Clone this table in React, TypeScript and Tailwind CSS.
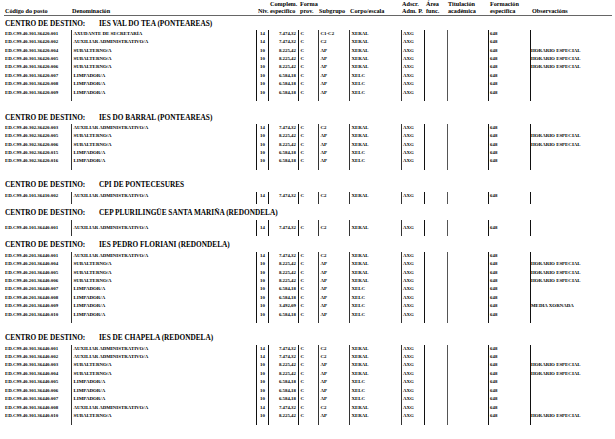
import React from "react";

type Row = [string, string, string, string, string, string, string];

const C = [
  "w-[67px] pl-[1px]",
  "w-[185px] border-solid border-l-[1px] border-l-[#333] pl-[1.5px]",
  "w-[12px] border-solid border-l-[1.5px] border-l-[#111] justify-center",
  "w-[30px] border-solid border-l-[1.5px] border-l-[#111] justify-end pr-[2px]",
  "w-[20px] border-solid border-l-[1.5px] border-l-[#111] pl-[1.5px]",
  "w-[31px] border-solid border-l-[1px] border-l-[#333] pl-[1.5px]",
  "w-[52px] border-solid border-l-[1px] border-l-[#333] pl-[1.5px]",
  "w-[23px] border-solid border-l-[1px] border-l-[#333] pl-[1px]",
  "w-[23px] border-solid border-l-[1.5px] border-l-[#111]",
  "w-[41px] border-solid border-l-[1px] border-l-[#555]",
  "w-[42px] border-solid border-l-[1.5px] border-l-[#111] pl-[1px]",
  "w-[82px] border-solid border-l-[1.5px] border-l-[#111]",
];

type Section = { name: string; mt: string; pre?: boolean; rows: Row[] };

const AUX = "AUXILIAR ADMINISTRATIVO/A";
const SUB = "SUBALTERNO/A";
const LIM = "LIMPADOR/A";
const HE = "HORARIO ESPECIAL";

const sections: Section[] = [
  {
    name: "IES VAL DO TEA (PONTEAREAS)",
    mt: "mt-0",
    rows: [
      ["ED.C99.40.301.36420.001", "AXUDANTE DE SECRETARÍA", "14", "7.474,32", "C1-C2", "XERAL", ""],
      ["ED.C99.40.301.36420.002", AUX, "14", "7.474,32", "C2", "XERAL", ""],
      ["ED.C99.40.301.36420.004", SUB, "10", "8.225,42", "AP", "XERAL", HE],
      ["ED.C99.40.301.36420.005", SUB, "10", "8.225,42", "AP", "XERAL", HE],
      ["ED.C99.40.301.36420.006", SUB, "10", "8.225,42", "AP", "XERAL", HE],
      ["ED.C99.40.301.36420.007", LIM, "10", "6.584,18", "AP", "XELC", ""],
      ["ED.C99.40.301.36420.008", LIM, "10", "6.584,18", "AP", "XELC", ""],
      ["ED.C99.40.301.36420.009", LIM, "10", "6.584,18", "AP", "XELC", ""],
    ],
  },
  {
    name: "IES DO BARRAL (PONTEAREAS)",
    mt: "mt-[8.6px]",
    rows: [
      ["ED.C99.40.302.36420.003", AUX, "14", "7.474,32", "C2", "XERAL", ""],
      ["ED.C99.40.302.36420.005", SUB, "10", "8.225,42", "AP", "XERAL", HE],
      ["ED.C99.40.302.36420.006", SUB, "10", "8.225,42", "AP", "XERAL", HE],
      ["ED.C99.40.302.36420.015", LIM, "10", "6.584,18", "AP", "XELC", ""],
      ["ED.C99.40.302.36420.016", LIM, "10", "6.584,18", "AP", "XELC", ""],
    ],
  },
  {
    name: "CPI DE PONTECESURES",
    mt: "mt-[7.8px]",
    rows: [["ED.C99.40.101.36410.002", AUX, "14", "7.474,32", "C2", "XERAL", ""]],
  },
  {
    name: "CEP PLURILINGÜE SANTA MARIÑA (REDONDELA)",
    mt: "mt-[1.6px]",
    pre: true,
    rows: [["ED.C99.40.101.36440.001", AUX, "14", "7.474,32", "C2", "XERAL", ""]],
  },
  {
    name: "IES PEDRO FLORIANI (REDONDELA)",
    mt: "mt-[1.6px]",
    rows: [
      ["ED.C99.40.201.36440.001", AUX, "14", "7.474,32", "C2", "XERAL", ""],
      ["ED.C99.40.201.36440.004", SUB, "10", "8.225,42", "AP", "XERAL", HE],
      ["ED.C99.40.201.36440.005", SUB, "10", "8.225,42", "AP", "XERAL", HE],
      ["ED.C99.40.201.36440.006", SUB, "10", "8.225,42", "AP", "XERAL", HE],
      ["ED.C99.40.201.36440.007", LIM, "10", "6.584,18", "AP", "XELC", ""],
      ["ED.C99.40.201.36440.008", LIM, "10", "6.584,18", "AP", "XELC", ""],
      ["ED.C99.40.201.36440.009", LIM, "10", "3.492,09", "AP", "XELC", "MEDIA XORNADA"],
      ["ED.C99.40.201.36440.010", LIM, "10", "6.584,18", "AP", "XELC", ""],
    ],
  },
  {
    name: "IES DE CHAPELA (REDONDELA)",
    mt: "mt-[7.6px]",
    rows: [
      ["ED.C99.40.301.36440.001", AUX, "14", "7.474,32", "C2", "XERAL", ""],
      ["ED.C99.40.301.36440.002", AUX, "14", "7.474,32", "C2", "XERAL", ""],
      ["ED.C99.40.301.36440.003", SUB, "10", "8.225,42", "AP", "XERAL", HE],
      ["ED.C99.40.301.36440.004", SUB, "10", "8.225,42", "AP", "XERAL", HE],
      ["ED.C99.40.301.36440.005", LIM, "10", "6.584,18", "AP", "XELC", ""],
      ["ED.C99.40.301.36440.006", LIM, "10", "6.584,18", "AP", "XELC", ""],
      ["ED.C99.40.301.36440.007", LIM, "10", "6.584,18", "AP", "XELC", ""],
      ["ED.C99.40.301.36440.008", AUX, "14", "7.474,32", "C2", "XERAL", ""],
      ["ED.C99.40.301.36440.010", SUB, "10", "8.225,42", "AP", "XERAL", HE],
    ],
  },
];

function DataRow({ r }: { r: Row }) {
  const cells = [r[0], r[1], r[2], r[3], "C", r[4], r[5], "AXG", "", "", "648", r[6]];
  return (
    <div className="flex h-[8.43px]">
      {cells.map((t, i) => (
        <div key={i} className={`${C[i]} flex h-full shrink-0 items-center whitespace-nowrap`}>
          {t}
        </div>
      ))}
    </div>
  );
}

function Spacer() {
  return (
    <div className="flex h-[4px]">
      {C.map((c, i) => (
        <div key={i} className={`${c} h-full shrink-0`} />
      ))}
    </div>
  );
}

function Header() {
  const h: [string, string, string][] = [
    ["", "Código do posto", "w-[67px] pl-[1px]"],
    ["", "Denominación", "w-[185px] pl-[1px]"],
    ["", "Niv.", "w-[12px] pl-[2px]"],
    ["Complem.", "específico", "w-[30px] pl-[2px]"],
    ["Forma", "prov.", "w-[20px] pl-[2px]"],
    ["", "Subgrupo", "w-[31px] pl-[1px]"],
    ["", "Corpo/escala", "w-[52px] pl-[1px]"],
    ["Adscr.", "Adm. P.", "w-[23px] pl-[1px]"],
    ["Área", "func.", "w-[23px] pl-[2px]"],
    ["Titulación", "académica", "w-[41px] pl-[1px]"],
    ["Formación", "específica", "w-[42px] pl-[2px]"],
    ["", "Observacións", "w-[82px] pl-[2px]"],
  ];
  return (
    <div className="flex h-[16px] items-end border-b border-[#666] w-[608px] text-[6.2px] font-bold leading-[7px] pb-[1px]">
      {h.map(([a, b, w], i) => (
        <div key={i} className={`${w} flex shrink-0 flex-col whitespace-nowrap`}>
          <span>{a || "\u00a0"}</span>
          <span>{b}</span>
        </div>
      ))}
    </div>
  );
}

export default function App() {
  return (
    <div className="w-[615px] h-[439px] bg-white overflow-hidden pl-[4px] text-black font-['Liberation_Serif','Times_New_Roman',serif]">
      <Header />
      {sections.map((s, si) => (
        <div key={si} className={s.mt}>
          <div className="h-[14px] flex items-center pt-[2px] text-[7.3px] font-bold whitespace-nowrap">
            <span className="w-[95px] pl-[1px]">CENTRO DE DESTINO:</span>
            <span>{s.name}</span>
          </div>
          {s.pre && <Spacer />}
          <div className="text-[4.9px] font-bold leading-none">
            {s.rows.map((r, ri) => (
              <DataRow key={ri} r={r} />
            ))}
            <Spacer />
          </div>
        </div>
      ))}
    </div>
  );
}
